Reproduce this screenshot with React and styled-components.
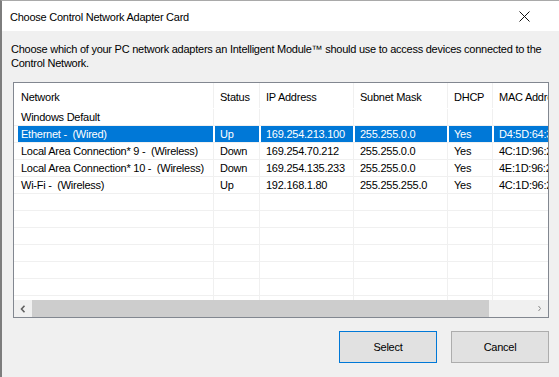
import styled, { createGlobalStyle } from "styled-components";

const GlobalStyle = createGlobalStyle`
    html, body {
        margin: 0;
        padding: 0;
        background: #f0f0f0;
    }
    body {
        font-family: "Liberation Sans", Arial, sans-serif;
        font-size: 11px;
        letter-spacing: -0.25px;
        color: #000;
    }
`;

const Window = styled.div`
    width: 559px;
    height: 377px;
    box-sizing: border-box;
    border-top: 1px solid #a9a9a9;
    border-left: 2px solid #7d7d7d;
    display: flex;
    flex-direction: column;
    background: #f0f0f0;
    overflow: hidden;
`;

const TitleBar = styled.div`
    height: 30px;
    flex: none;
    background: #fff;
    display: flex;
    align-items: center;
    justify-content: space-between;
    padding: 1px 0 0 8px;
    box-sizing: border-box;
    .title {
        font-size: 11px;
    }
`;

const CloseBtn = styled.div`
    width: 46px;
    height: 100%;
    display: flex;
    align-items: center;
    justify-content: center;
    padding-right: 12px;
`;

const Body = styled.div`
    flex: 1;
    display: flex;
    flex-direction: column;
    padding: 11px 10px 0 11px;
`;

const Prompt = styled.p`
    margin: 0 0 12px -2px;
    line-height: 14px;
    font-size: 11px;
    white-space: nowrap;
`;

const ListBox = styled.div`
    height: 236px;
    box-sizing: border-box;
    border: 1px solid #828790;
    background: #fff;
    display: flex;
    flex-direction: column;
    overflow: hidden;
`;

const Rows = styled.div`
    flex: 1;
    overflow: hidden;
`;

const COLS = "200px 46px 94px 94px 45px 110px";

const Row = styled.div`
    display: grid;
    grid-template-columns: ${COLS};
    height: ${(p) => (p.$header ? 26 : 17)}px;
    box-sizing: border-box;
    border-bottom: 1px solid ${(p) => (p.$header ? "transparent" : "#f0f0f0")};
    color: ${(p) => (p.$selected ? "#fff" : "#000")};
`;

const Cell = styled.div`
    border-right: 1px solid ${(p) => (p.$selected ? "#fff" : "#f0f0f0")};
    background: ${(p) => (p.$selected ? "#0078d7" : "transparent")};
    box-shadow: ${(p) =>
        p.$selected ? (p.$first ? "inset 4px 0 #fff" : "inset 1px 0 #fff") : "none"};
    padding-left: ${(p) => (p.$first ? 7 : 6)}px;
    padding-top: ${(p) => (p.$header ? 3 : 0)}px;
    display: flex;
    align-items: center;
    white-space: pre;
    overflow: hidden;
    font-size: 11px;
`;

const ScrollBar = styled.div`
    height: 17px;
    flex: none;
    display: flex;
    background: #f0f0f0;
`;

const ArrowBtn = styled.div`
    width: 17px;
    display: flex;
    align-items: center;
    justify-content: center;
`;

const Track = styled.div`
    flex: 1;
    display: flex;
    padding-left: 1px;
`;

const Thumb = styled.div`
    width: 457px;
    background: #cdcdcd;
`;

const Footer = styled.div`
    display: flex;
    justify-content: flex-end;
    gap: 14px;
    margin-top: 13px;
`;

const Button = styled.button`
    width: 98px;
    height: 32px;
    box-sizing: border-box;
    background: #e1e1e1;
    border: 1px solid ${(p) => (p.$default ? "#0078d7" : "#adadad")};
    font-family: "Liberation Sans", Arial, sans-serif;
    font-size: 11px;
    letter-spacing: -0.25px;
    color: #000;
    padding: 0;
`;

const columns = [
    { key: "network", label: "Network" },
    { key: "status", label: "Status" },
    { key: "ip", label: "IP Address" },
    { key: "mask", label: "Subnet Mask" },
    { key: "dhcp", label: "DHCP" },
    { key: "mac", label: "MAC Address" },
];

const adapters = [
    { network: "Windows Default" },
    { network: "Ethernet -  (Wired)", status: "Up", ip: "169.254.213.100", mask: "255.255.0.0", dhcp: "Yes", mac: "D4:5D:64:3A:8B:21", selected: true },
    { network: "Local Area Connection* 9 -  (Wireless)", status: "Down", ip: "169.254.70.212", mask: "255.255.0.0", dhcp: "Yes", mac: "4C:1D:96:2F:71:0A" },
    { network: "Local Area Connection* 10 -  (Wireless)", status: "Down", ip: "169.254.135.233", mask: "255.255.0.0", dhcp: "Yes", mac: "4E:1D:96:2F:71:09" },
    { network: "Wi-Fi -  (Wireless)", status: "Up", ip: "192.168.1.80", mask: "255.255.255.0", dhcp: "Yes", mac: "4C:1D:96:2F:71:09" },
];

const blanks = Array.from({ length: 8 }, () => ({}));

export default function App() {
    return (
        <>
            <GlobalStyle />
            <Window>
                <TitleBar>
                    <span className="title">Choose Control Network Adapter Card</span>
                    <CloseBtn>
                        <svg width="11" height="11" viewBox="0 0 11 11">
                            <path d="M0.5 0.5 L10.5 10.5 M10.5 0.5 L0.5 10.5" stroke="#111" strokeWidth="1" />
                        </svg>
                    </CloseBtn>
                </TitleBar>
                <Body>
                    <Prompt>
                        Choose which of your PC network adapters an Intelligent Module™ should use to access devices connected to the
                        <br />
                        Control Network.
                    </Prompt>
                    <ListBox>
                        <Rows>
                            <Row $header>
                                {columns.map((c, i) => (
                                    <Cell key={c.key} $header $first={i === 0}>
                                        {c.label}
                                    </Cell>
                                ))}
                            </Row>
                            {[...adapters, ...blanks].map((a, r) => (
                                <Row key={r} $selected={a.selected}>
                                    {columns.map((c, i) => (
                                        <Cell key={c.key} $first={i === 0} $selected={a.selected}>
                                            {a[c.key] || ""}
                                        </Cell>
                                    ))}
                                </Row>
                            ))}
                        </Rows>
                        <ScrollBar>
                            <ArrowBtn>
                                <svg width="6" height="8" viewBox="0 0 6 8">
                                    <path d="M4.5 0.8 L1.5 4 L4.5 7.2" fill="none" stroke="#606060" strokeWidth="1.6" />
                                </svg>
                            </ArrowBtn>
                            <Track>
                                <Thumb />
                            </Track>
                            <ArrowBtn>
                                <svg width="5" height="7" viewBox="0 0 5 7">
                                    <path d="M1.5 1 L3.5 3.5 L1.5 6" fill="none" stroke="#8a8a8a" strokeWidth="1" />
                                </svg>
                            </ArrowBtn>
                        </ScrollBar>
                    </ListBox>
                    <Footer>
                        <Button $default>Select</Button>
                        <Button>Cancel</Button>
                    </Footer>
                </Body>
            </Window>
        </>
    );
}
